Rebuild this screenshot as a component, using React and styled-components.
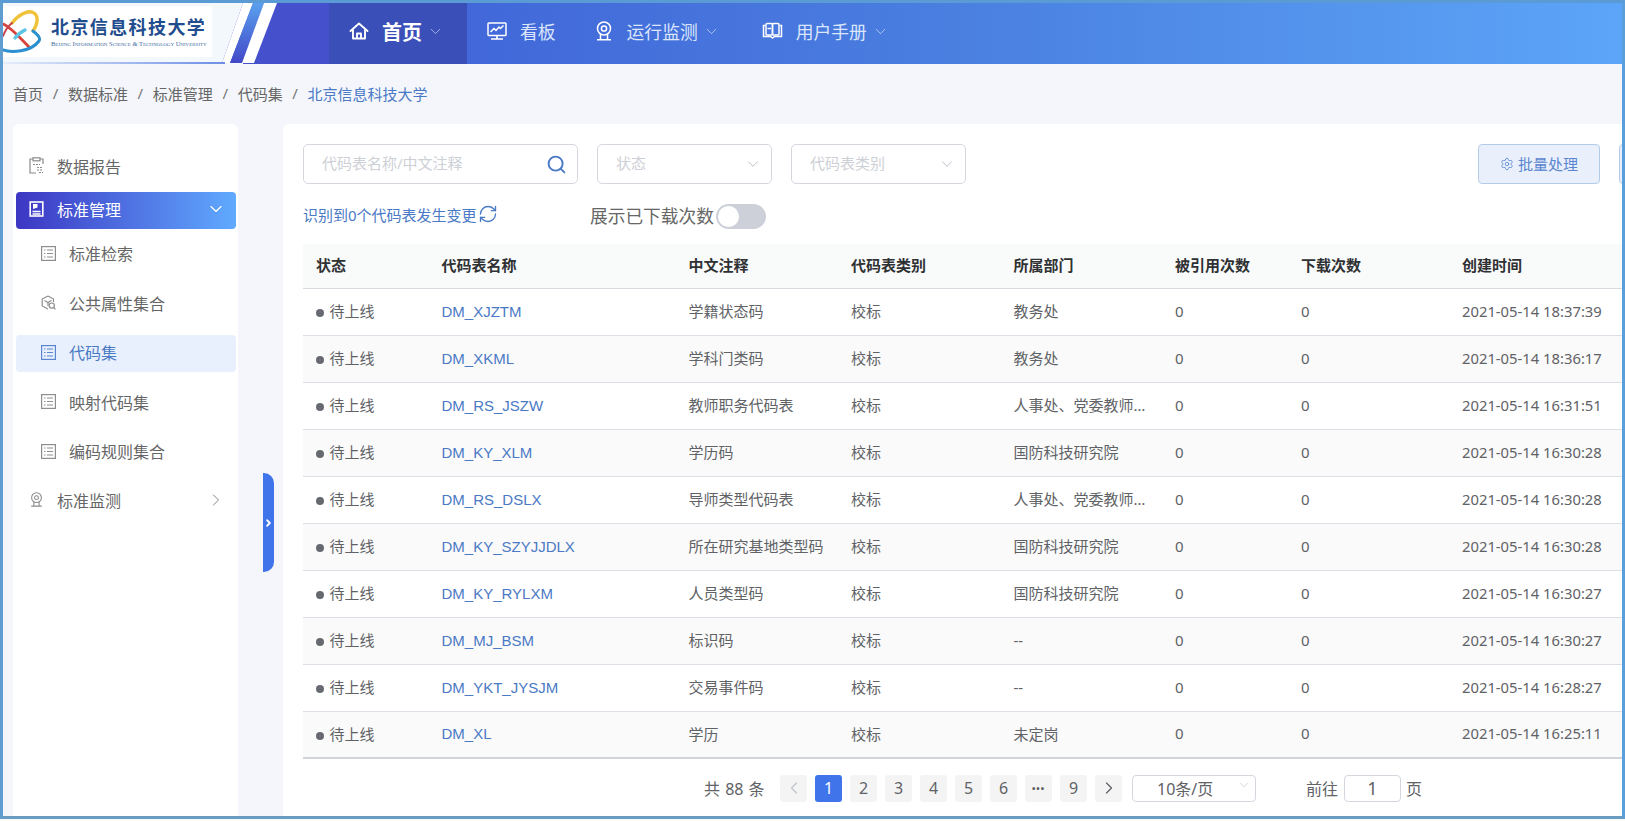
import React from "react";
import styled, { createGlobalStyle } from "styled-components";
import { ChevronDown, ChevronRight, ChevronLeft, Search, Settings, RefreshCw } from "lucide-react";

const rows = [
  ["DM_XJZTM", "学籍状态码", "校标", "教务处", "2021-05-14 18:37:39"],
  ["DM_XKML", "学科门类码", "校标", "教务处", "2021-05-14 18:36:17"],
  ["DM_RS_JSZW", "教师职务代码表", "校标", "人事处、党委教师工作部", "2021-05-14 16:31:51"],
  ["DM_KY_XLM", "学历码", "校标", "国防科技研究院", "2021-05-14 16:30:28"],
  ["DM_RS_DSLX", "导师类型代码表", "校标", "人事处、党委教师工作部", "2021-05-14 16:30:28"],
  ["DM_KY_SZYJJDLX", "所在研究基地类型码", "校标", "国防科技研究院", "2021-05-14 16:30:28"],
  ["DM_KY_RYLXM", "人员类型码", "校标", "国防科技研究院", "2021-05-14 16:30:27"],
  ["DM_MJ_BSM", "标识码", "校标", "--", "2021-05-14 16:30:27"],
  ["DM_YKT_JYSJM", "交易事件码", "校标", "--", "2021-05-14 16:28:27"],
  ["DM_XL", "学历", "校标", "未定岗", "2021-05-14 16:25:11"],
];

const columns = [125.5, 247, 162.5, 162.5, 161.5, 126, 161, 173];
const headers = ["状态", "代码表名称", "中文注释", "代码表类别", "所属部门", "被引用次数", "下载次数", "创建时间"];
const crumbs = ["首页", "数据标准", "标准管理", "代码集", "北京信息科技大学"];

function HomeIcon() {
  return (
    <svg width="20" height="20" viewBox="0 0 20 20" fill="none" stroke="#fff" strokeWidth="1.9" strokeLinejoin="round">
      <path d="M1.5 10 10 2.5 18.5 10" strokeLinecap="round" />
      <path d="M4 8.5V17.5H16V8.5" />
      <path d="M8 17.5V12.5H12V17.5" />
    </svg>
  );
}

function BoardIcon() {
  return (
    <svg width="20" height="20" viewBox="0 0 20 20" fill="none" stroke="#fff" strokeWidth="1.5">
      <rect x="1" y="2" width="18" height="12.5" rx="0.8" />
      <path d="M3.5 11 7 7.5 9 9.5 12 6 13.5 7.5 16.5 4.5" />
      <path d="M10 14.5V18M4 18H16" strokeWidth="1.7" />
    </svg>
  );
}

function CameraIcon({ size = 20, color = "#fff", weight = 1.5 }) {
  return (
    <svg width={size} height={size} viewBox="0 0 20 20" fill="none" stroke={color} strokeWidth={weight}>
      <circle cx="10" cy="7.5" r="6.5" />
      <circle cx="10" cy="7.5" r="2.6" />
      <path d="M6.5 13V18.5M13.5 13V18.5M3 18.8H17" />
    </svg>
  );
}

function BookIcon() {
  return (
    <svg width="21" height="20" viewBox="0 0 21 20" fill="none" stroke="#fff" strokeWidth="1.5">
      <path d="M3 4.5H1.5V15.5H8.5L10.5 17 12.5 15.5H19.5V4.5H18" />
      <rect x="4" y="2.5" width="6.5" height="11.5" rx="1" />
      <rect x="10.5" y="2.5" width="6.5" height="11.5" rx="1" />
      <path d="M5.5 7.5H9" />
    </svg>
  );
}

function ReportIcon() {
  return (
    <svg width="15" height="17" viewBox="0 0 15 17" fill="none" stroke="#8a8a8a" strokeWidth="1.2">
      <path d="M4 2H1V16H7" />
      <path d="M11 2H14V7" />
      <rect x="4" y="0.8" width="7" height="3" />
      <path d="M4 7.5H11M8 10.5H14M8 13H14M10 15.5H14" strokeDasharray="2 1" />
    </svg>
  );
}

function ManageIcon() {
  return (
    <svg width="15" height="16" viewBox="0 0 15 16" fill="none" stroke="#fff" strokeWidth="1.6">
      <rect x="1.2" y="1" width="12.6" height="14" />
      <path d="M3.5 10.5H11.5M3.5 13H11.5" />
      <path d="M4 3H8.5V6.5L4 8Z" fill="#fff" stroke="none" />
    </svg>
  );
}

function ListIcon({ color = "#8e8e8e" }) {
  return (
    <svg width="15" height="15" viewBox="0 0 15 15" fill="none" stroke={color} strokeWidth="1.2">
      <rect x="0.6" y="0.6" width="13.8" height="13.8" />
      <path d="M3 4H4.5M6 4H12M3 7.5H4.5M6 7.5H12M3 11H4.5M6 11H12" />
    </svg>
  );
}

function HexIcon() {
  return (
    <svg width="15" height="15" viewBox="0 0 15 15" fill="none" stroke="#8e8e8e" strokeWidth="1.2">
      <path d="M7 1 12.5 4V7M7 1 1.2 4V11L7 14" />
      <path d="M3.5 5.5 7 7.5 10.5 5.5M7 7.5V11" />
      <circle cx="10.8" cy="10.6" r="2.6" />
      <path d="M12.8 12.6 14.5 14.3" />
    </svg>
  );
}

function Emblem() {
  return (
    <EmblemSvg width="38" height="42" viewBox="0 0 38 42" fill="none" strokeLinecap="round">
      <path d="M9 12C15 4 25 -1 30 1.5 36 4 35 13 30 20" stroke="#f0c23a" strokeWidth="3.4" />
      <path d="M0 13C8 16 18 28 27 37" stroke="#d8423a" strokeWidth="2.8" />
      <path d="M0 25C2 20 5 15 9 12" stroke="#c8454a" strokeWidth="2" />
      <path d="M0 39C8 42 28 41 36 30 38 27 34 23 30 20" stroke="#2c8fd0" strokeWidth="3" />
      <path d="M12 27C15 23 18 21 22 19" stroke="#5cc4e4" strokeWidth="3.4" />
    </EmblemSvg>
  );
}

function Slants() {
  return (
    <SlantSvg width="60" height="60" viewBox="0 0 60 60" preserveAspectRatio="none">
      <defs>
        <linearGradient id="stripe" x1="0" y1="0" x2="0" y2="1">
          <stop offset="0" stopColor="#5aa0ee" />
          <stop offset="1" stopColor="#4248c8" />
        </linearGradient>
      </defs>
      <polygon points="0,60 21,0 60,0 60,60" fill="#4450cc" />
      <polygon points="0,60 21,0 31,0 8,60" fill="#fff" />
      <polygon points="8,60 31,0 42,0 20,60" fill="url(#stripe)" />
      <polygon points="20,60 42,0 55,0 32,60" fill="#fff" />
    </SlantSvg>
  );
}

function Pager({ active, muted, children }) {
  return (
    <PageButton $active={active} $muted={muted}>
      {children}
    </PageButton>
  );
}

export default function App() {
  return (
    <Frame>
      <GlobalStyle />
      <Header>
        <Brand>
          <Logo>
            <Emblem />
            <LogoText>
              <LogoName>北京信息科技大学</LogoName>
              <LogoSub>Beijing Information Science &amp; Technology University</LogoSub>
            </LogoText>
          </Logo>
          <Slants />
        </Brand>
        <Nav>
          <NavItem $active>
            <HomeIcon />
            <NavLabel $active>首页</NavLabel>
            <ChevronDown size={17} strokeWidth={1.2} color="#b9c6ee" />
          </NavItem>
          <NavItem>
            <BoardIcon />
            <NavLabel>看板</NavLabel>
          </NavItem>
          <NavItem>
            <CameraIcon />
            <NavLabel>运行监测</NavLabel>
            <ChevronDown size={17} strokeWidth={1.2} color="#c5d5f5" />
          </NavItem>
          <NavItem>
            <BookIcon />
            <NavLabel>用户手册</NavLabel>
            <ChevronDown size={17} strokeWidth={1.2} color="#c5d5f5" />
          </NavItem>
        </Nav>
      </Header>

      <Breadcrumb>
        {crumbs.map((c, i) => (
          <React.Fragment key={c}>
            {i > 0 && <CrumbSep>/</CrumbSep>}
            <Crumb $current={i === crumbs.length - 1}>{c}</Crumb>
          </React.Fragment>
        ))}
      </Breadcrumb>

      <Body>
        <Sidebar>
          <MenuGroup>
            <MenuItem>
              <MenuIcon><ReportIcon /></MenuIcon>
              数据报告
            </MenuItem>
            <MenuItem $open>
              <MenuIcon><ManageIcon /></MenuIcon>
              标准管理
              <MenuArrow><ChevronDown size={20} strokeWidth={1.4} color="#fff" /></MenuArrow>
            </MenuItem>
          </MenuGroup>
          <SubMenu>
            <SubItem><MenuIcon><ListIcon /></MenuIcon>标准检索</SubItem>
            <SubItem><MenuIcon><HexIcon /></MenuIcon>公共属性集合</SubItem>
            <SubItem $selected><MenuIcon><ListIcon color="#5b86cf" /></MenuIcon>代码集</SubItem>
            <SubItem><MenuIcon><ListIcon /></MenuIcon>映射代码集</SubItem>
            <SubItem><MenuIcon><ListIcon /></MenuIcon>编码规则集合</SubItem>
            <MonitorItem>
              <MenuIcon><CameraIcon size={15} color="#8a8a8a" weight={1.4} /></MenuIcon>
              标准监测
              <MenuArrow><ChevronRight size={20} strokeWidth={1.1} color="#777" /></MenuArrow>
            </MonitorItem>
          </SubMenu>
        </Sidebar>

        <Gutter>
          <Collapse>
            <ChevronRight size={14} strokeWidth={4} color="#fff" />
          </Collapse>
        </Gutter>

        <Main>
          <Toolbar>
            <SearchBox>
              <Placeholder>代码表名称/中文注释</Placeholder>
              <Search size={21} strokeWidth={2.2} color="#4a79c5" />
            </SearchBox>
            <SelectBox>
              <Placeholder>状态</Placeholder>
              <ChevronDown size={18} strokeWidth={1.2} color="#b5b9c2" />
            </SelectBox>
            <SelectBox>
              <Placeholder>代码表类别</Placeholder>
              <ChevronDown size={18} strokeWidth={1.2} color="#b5b9c2" />
            </SelectBox>
            <BatchButton>
              <Settings size={14} strokeWidth={1.4} />
              <BatchLabel>批量处理</BatchLabel>
            </BatchButton>
            <BatchButton />
          </Toolbar>

          <OptionRow>
            <ChangeNote>
              <NoteText>识别到0个代码表发生变更</NoteText>
              <RefreshCw size={20} strokeWidth={1.6} color="#4a79c5" />
            </ChangeNote>
            <SwitchLabel>展示已下载次数</SwitchLabel>
            <SwitchTrack>
              <SwitchKnob />
            </SwitchTrack>
          </OptionRow>

          <Table>
            <colgroup>
              {columns.map((w, i) => (
                <col key={i} width={w} />
              ))}
            </colgroup>
            <thead>
              <tr>
                {headers.map((h) => (
                  <Th key={h}>{h}</Th>
                ))}
              </tr>
            </thead>
            <tbody>
              {rows.map((r) => (
                <Row key={r[0]}>
                  <Td>
                    <StatusDot />
                    待上线
                  </Td>
                  <Td><CodeLink>{r[0]}</CodeLink></Td>
                  <Td>{r[1]}</Td>
                  <Td>{r[2]}</Td>
                  <Td>{r[3]}</Td>
                  <Td>0</Td>
                  <Td>0</Td>
                  <Td><DateText>{r[4]}</DateText></Td>
                </Row>
              ))}
            </tbody>
          </Table>

          <Pagination>
            <Total>共 88 条</Total>
            <Pages>
              <Pager muted><ChevronLeft size={20} strokeWidth={1.5} /></Pager>
              <Pager active>1</Pager>
              <Pager>2</Pager>
              <Pager>3</Pager>
              <Pager>4</Pager>
              <Pager>5</Pager>
              <Pager>6</Pager>
              <Pager><Dots>•••</Dots></Pager>
              <Pager>9</Pager>
              <Pager><ChevronRight size={20} strokeWidth={1.5} /></Pager>
            </Pages>
            <SizeSelect>
              10条/页
              <SizeArrow><ChevronDown size={14} strokeWidth={1.2} color="#c0c4cc" /></SizeArrow>
            </SizeSelect>
            <JumpLabel>前往</JumpLabel>
            <JumpInput>1</JumpInput>
            <JumpTail>页</JumpTail>
          </Pagination>
        </Main>
      </Body>
    </Frame>
  );
}

const GlobalStyle = createGlobalStyle`
  html, body {
    margin: 0;
    background: #f4fbfb;
    overflow: hidden;
  }
  * {
    box-sizing: border-box;
  }
`;

const Frame = styled.div`
  width: 1625px;
  height: 819px;
  border-style: solid;
  border-width: 3px;
  border-color: #5b9bd5 #5a9fdc #6a9bc0 #5f9dd0;
  background: #f4f6fb;
  font-family: "Noto Sans", "Noto Sans CJK SC", sans-serif;
  display: flex;
  flex-direction: column;
  overflow: hidden;
`;

const Header = styled.header`
  height: 61px;
  flex-shrink: 0;
  display: flex;
  background: linear-gradient(90deg, #4450cc 260px, #4268d9 470px, #4a7fe0 950px, #5ca5f8 100%);
`;

const Brand = styled.div`
  width: 326px;
  display: flex;
  flex-shrink: 0;
  position: relative;
  background: linear-gradient(90deg, #f3f8fd 240px, #4450cc 240px);
  &::after {
    content: "";
    position: absolute;
    left: 0;
    bottom: 0;
    width: 222px;
    height: 2px;
    background: linear-gradient(90deg, #e6eefa, #6d8ee6);
  }
`;

const Logo = styled.div`
  width: 209px;
  height: 51px;
  margin-top: 3px;
  background: #fff;
  display: flex;
  align-items: center;
  gap: 10px;
`;

const EmblemSvg = styled.svg`
  flex-shrink: 0;
  overflow: visible;
`;

const LogoText = styled.div`
  display: flex;
  flex-direction: column;
`;

const LogoName = styled.div`
  font-size: 18px;
  line-height: 24px;
  font-weight: 700;
  color: #1f4d8e;
  letter-spacing: 1.4px;
  white-space: nowrap;
`;

const LogoSub = styled.div`
  font-family: "Liberation Serif", serif;
  font-size: 6.5px;
  line-height: 10px;
  font-variant: small-caps;
  color: #3d6c9f;
  white-space: nowrap;
`;

const SlantSvg = styled.svg`
  position: absolute;
  left: 219px;
  top: 0;
  height: 60px;
`;

const Nav = styled.nav`
  display: flex;
  flex: 1;
`;

const NavItem = styled.div`
  display: flex;
  align-items: center;
  gap: 13px;
  padding: 0 ${(p) => (p.$active ? "23px" : "20px")} 5px 20px;
  margin-right: ${(p) => (p.$active ? "0" : "-2px")};
  background: ${(p) => (p.$active ? "#3a4fb8" : "transparent")};
  &:nth-child(3) {
    margin-right: 2px;
  }
  svg:last-child:not(:first-child) {
    margin-left: -8px;
  }
`;

const NavLabel = styled.span`
  font-size: ${(p) => (p.$active ? "20px" : "17.8px")};
  font-weight: ${(p) => (p.$active ? 700 : 400)};
  color: ${(p) => (p.$active ? "#fff" : "#dbe6fb")};
`;

const Breadcrumb = styled.div`
  height: 60px;
  flex-shrink: 0;
  padding: 0 0 2px 10px;
  display: flex;
  align-items: center;
  font-size: 15px;
  color: #666;
`;

const Crumb = styled.span`
  color: ${(p) => (p.$current ? "#4a79c5" : "#666")};
`;

const CrumbSep = styled.span`
  margin: 0 9.65px;
  color: #777;
`;

const Body = styled.div`
  flex: 1;
  min-height: 0;
  padding-left: 10px;
  display: flex;
`;

const Sidebar = styled.aside`
  width: 225px;
  flex-shrink: 0;
  background: #fff;
  border-radius: 6px 6px 0 0;
  padding: 24px 2px 0 3px;
`;

const MenuGroup = styled.div`
  display: flex;
  flex-direction: column;
  gap: 6px;
`;

const SubMenu = styled.div`
  margin-top: 6.5px;
  display: flex;
  flex-direction: column;
  gap: 12px;
`;

const MenuItem = styled.div`
  height: 37.5px;
  padding: 0 0 2px 13px;
  display: flex;
  align-items: center;
  font-size: 16px;
  border-radius: 4px;
  color: ${(p) => (p.$open ? "#fff" : "#666")};
  background: ${(p) => (p.$open ? "linear-gradient(90deg, #3c36c3, #60aaff)" : "transparent")};
`;

const SubItem = styled(MenuItem)`
  padding-left: 25px;
  color: ${(p) => (p.$selected ? "#4a79c5" : "#666")};
  background: ${(p) => (p.$selected ? "#e8f0fd" : "transparent")};
`;

const MonitorItem = styled(MenuItem)`
  margin-top: -1px;
`;

const MenuIcon = styled.span`
  width: 15px;
  margin-right: 13px;
  display: flex;
  justify-content: center;
`;

const MenuArrow = styled.span`
  margin-left: auto;
  margin-right: 10px;
  display: flex;
`;

const Gutter = styled.div`
  width: 45px;
  flex-shrink: 0;
  position: relative;
`;

const Collapse = styled.div`
  position: absolute;
  left: 25px;
  top: 349px;
  width: 11px;
  height: 99px;
  background: #3f74ea;
  border-radius: 0 10px 10px 0;
  display: flex;
  align-items: center;
  justify-content: center;
`;

const Main = styled.main`
  flex: 1;
  min-width: 0;
  background: #fff;
  border-radius: 6px 0 0 0;
  padding: 20px 0 0 20px;
  overflow: hidden;
`;

const Toolbar = styled.div`
  display: flex;
  gap: 19px;
  height: 40px;
`;

const SearchBox = styled.div`
  width: 275px;
  height: 40px;
  flex-shrink: 0;
  border: 1px solid #d4d7de;
  border-radius: 5px;
  padding: 0 10px 0 18px;
  display: flex;
  align-items: center;
  justify-content: space-between;
`;

const SelectBox = styled(SearchBox)`
  width: 175px;
  padding-right: 9px;
`;

const Placeholder = styled.span`
  font-size: 15px;
  color: #cdd0d6;
  margin-bottom: 3px;
`;

const BatchButton = styled.div`
  width: 122px;
  height: 40px;
  flex-shrink: 0;
  background: #e9f0fc;
  border: 1px solid #b5cbea;
  border-radius: 4px;
  color: #5b86cf;
  font-size: 15px;
  display: flex;
  align-items: center;
  justify-content: center;
  gap: 4px;
  &:nth-of-type(4) {
    margin-left: 493px;
  }
`;

const BatchLabel = styled.span`
  margin-bottom: 2px;
`;

const OptionRow = styled.div`
  margin-top: 20px;
  height: 25px;
  display: flex;
  align-items: center;
`;

const ChangeNote = styled.div`
  width: 287px;
  display: flex;
  align-items: center;
  gap: 1px;
  white-space: nowrap;
  svg {
    margin-bottom: 6px;
  }
`;

const NoteText = styled.span`
  font-size: 15px;
  color: #4a79c5;
  margin-bottom: 4px;
`;

const SwitchLabel = styled.span`
  font-size: 17.7px;
  color: #666;
  white-space: nowrap;
  margin: 0 2px 3px 0;
`;

const SwitchTrack = styled.div`
  width: 50px;
  height: 25px;
  border-radius: 13px;
  background: #cdd0d9;
  padding: 2px;
`;

const SwitchKnob = styled.div`
  width: 21px;
  height: 21px;
  border-radius: 50%;
  background: #fff;
`;

const Table = styled.table`
  margin-top: 15px;
  width: 1319px;
  table-layout: fixed;
  border-collapse: collapse;
  font-size: 15px;
`;

const Th = styled.th`
  height: 44px;
  padding: 0 13px 2px;
  text-align: left;
  font-weight: 700;
  color: #303133;
  background: #f9fbfb;
  border-bottom: 1px solid #d8dbe0;
`;

const Row = styled.tr`
  &:nth-child(even) td {
    background: #fafafa;
  }
  &:last-child td {
    border-bottom: 2px solid #d0d3d9;
  }
`;

const Td = styled.td`
  height: 47px;
  padding: 0 13px 2px;
  color: #606266;
  border-bottom: 1px solid #dcdfe6;
  white-space: nowrap;
  overflow: hidden;
  text-overflow: ellipsis;
`;

const StatusDot = styled.span`
  display: inline-block;
  width: 8px;
  height: 8px;
  margin-right: 5.5px;
  border-radius: 50%;
  background: #666a70;
`;

const CodeLink = styled.span`
  font-family: "Liberation Sans", "Noto Sans", sans-serif;
  color: #4a79c5;
`;

const DateText = styled.span`
  font-size: 14.8px;
`;

const Pagination = styled.div`
  margin-top: 15px;
  padding-left: 401px;
  display: flex;
  align-items: center;
  height: 28px;
  font-size: 16px;
  color: #606266;
`;

const Total = styled.span`
  width: 76px;
  white-space: nowrap;
  word-spacing: 1px;
`;

const Pages = styled.div`
  display: flex;
  gap: 8px;
`;

const PageButton = styled.div`
  width: 27px;
  height: 27px;
  border-radius: 3px;
  display: flex;
  align-items: center;
  justify-content: center;
  background: ${(p) => (p.$active ? "#3f74ea" : "#f4f4f5")};
  color: ${(p) => (p.$active ? "#fff" : p.$muted ? "#c0c4cc" : "#606266")};
`;

const Dots = styled.span`
  font-size: 9px;
  font-weight: 700;
  letter-spacing: 1px;
  color: #555;
`;

const SizeSelect = styled.div`
  margin-left: 10px;
  width: 124px;
  height: 27px;
  border: 1px solid #d4d7de;
  border-radius: 4px;
  padding-left: 24px;
  display: flex;
  align-items: center;
`;

const SizeArrow = styled.span`
  margin-left: auto;
  margin-right: 4px;
  margin-top: -6px;
  display: flex;
`;

const JumpLabel = styled.span`
  margin-left: 50px;
  margin-right: 6px;
`;

const JumpInput = styled.div`
  width: 57px;
  height: 27px;
  border: 1px solid #d4d7de;
  border-radius: 4px;
  font-size: 18px;
  display: flex;
  align-items: center;
  justify-content: center;
`;

const JumpTail = styled.span`
  margin-left: 5px;
`;
